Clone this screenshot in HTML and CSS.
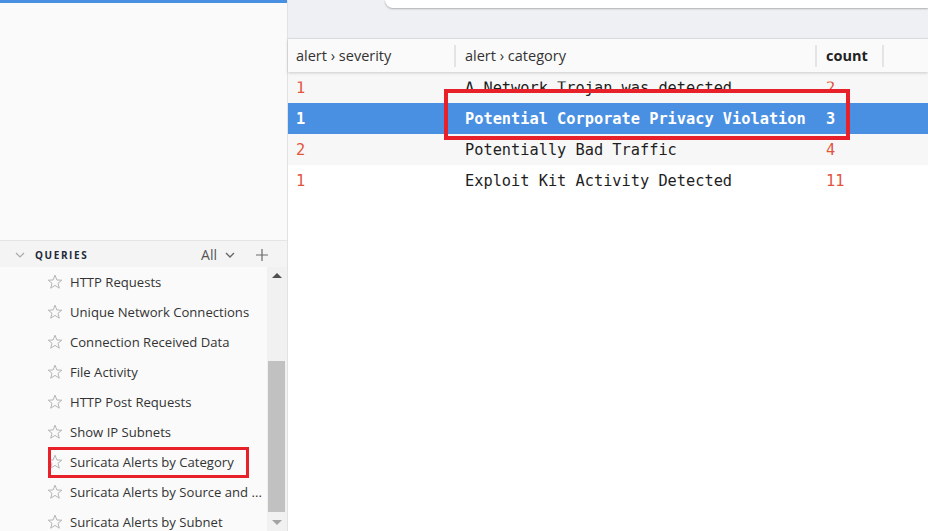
FILE: index.html
```html
<!DOCTYPE html>
<html>
<head>
<meta charset="utf-8">
<link rel="stylesheet" href="styles.css">
</head>
<body>
<aside class="sidebar">
  <div class="accent"></div>
  <div class="spacer"></div>
  <div class="q-header">
    <svg class="q-chev" width="10" height="6" viewBox="0 0 10 6"><path d="M1 1 L5 5 L9 1" fill="none" stroke="#aaa" stroke-width="1.2"/></svg>
    <span class="q-title">QUERIES</span>
    <span class="q-all">All</span>
    <svg class="q-down" width="10" height="6" viewBox="0 0 10 6"><path d="M1 1 L5 5 L9 1" fill="none" stroke="#666" stroke-width="1.4"/></svg>
    <svg class="q-plus" width="12" height="12" viewBox="0 0 12 12"><path d="M6 0 V12 M0 6 H12" stroke="#6a6a6a" stroke-width="1.2"/></svg>
  </div>
  <div class="q-body">
    <ul class="q-list">
      <li><svg class="star" viewBox="0 0 16 16"><path d="M8 1.2 L9.9 6 L14.8 6.2 L11 9.3 L12.3 14.2 L8 11.4 L3.7 14.2 L5 9.3 L1.2 6.2 L6.1 6 Z" fill="none" stroke="#b5b5b5" stroke-width="1"/></svg>HTTP Requests</li>
      <li><svg class="star" viewBox="0 0 16 16"><path d="M8 1.2 L9.9 6 L14.8 6.2 L11 9.3 L12.3 14.2 L8 11.4 L3.7 14.2 L5 9.3 L1.2 6.2 L6.1 6 Z" fill="none" stroke="#b5b5b5" stroke-width="1"/></svg>Unique Network Connections</li>
      <li><svg class="star" viewBox="0 0 16 16"><path d="M8 1.2 L9.9 6 L14.8 6.2 L11 9.3 L12.3 14.2 L8 11.4 L3.7 14.2 L5 9.3 L1.2 6.2 L6.1 6 Z" fill="none" stroke="#b5b5b5" stroke-width="1"/></svg>Connection Received Data</li>
      <li><svg class="star" viewBox="0 0 16 16"><path d="M8 1.2 L9.9 6 L14.8 6.2 L11 9.3 L12.3 14.2 L8 11.4 L3.7 14.2 L5 9.3 L1.2 6.2 L6.1 6 Z" fill="none" stroke="#b5b5b5" stroke-width="1"/></svg>File Activity</li>
      <li><svg class="star" viewBox="0 0 16 16"><path d="M8 1.2 L9.9 6 L14.8 6.2 L11 9.3 L12.3 14.2 L8 11.4 L3.7 14.2 L5 9.3 L1.2 6.2 L6.1 6 Z" fill="none" stroke="#b5b5b5" stroke-width="1"/></svg>HTTP Post Requests</li>
      <li><svg class="star" viewBox="0 0 16 16"><path d="M8 1.2 L9.9 6 L14.8 6.2 L11 9.3 L12.3 14.2 L8 11.4 L3.7 14.2 L5 9.3 L1.2 6.2 L6.1 6 Z" fill="none" stroke="#b5b5b5" stroke-width="1"/></svg>Show IP Subnets</li>
      <li><svg class="star" viewBox="0 0 16 16"><path d="M8 1.2 L9.9 6 L14.8 6.2 L11 9.3 L12.3 14.2 L8 11.4 L3.7 14.2 L5 9.3 L1.2 6.2 L6.1 6 Z" fill="none" stroke="#b5b5b5" stroke-width="1"/></svg>Suricata Alerts by Category</li>
      <li><svg class="star" viewBox="0 0 16 16"><path d="M8 1.2 L9.9 6 L14.8 6.2 L11 9.3 L12.3 14.2 L8 11.4 L3.7 14.2 L5 9.3 L1.2 6.2 L6.1 6 Z" fill="none" stroke="#b5b5b5" stroke-width="1"/></svg>Suricata Alerts by Source and ...</li>
      <li><svg class="star" viewBox="0 0 16 16"><path d="M8 1.2 L9.9 6 L14.8 6.2 L11 9.3 L12.3 14.2 L8 11.4 L3.7 14.2 L5 9.3 L1.2 6.2 L6.1 6 Z" fill="none" stroke="#b5b5b5" stroke-width="1"/></svg>Suricata Alerts by Subnet</li>
    </ul>
    <div class="scrollbar">
      <div class="arrow up"></div>
      <div class="track"><div class="thumb"></div></div>
      <div class="arrow down"></div>
    </div>
  </div>
  <div class="mark mark-query"></div>
</aside>
<main class="main">
  <div class="toolbar"><div class="search"></div></div>
  <div class="thead">
    <div class="th c-sev">alert › severity<span class="sep"></span></div>
    <div class="th c-cat">alert › category<span class="sep"></span></div>
    <div class="th c-cnt bold">count<span class="sep"></span></div>
  </div>
  <div class="tbody">
    <div class="row alt partial"><div class="td c-sev num">1</div><div class="td c-cat">A Network Trojan was detected</div><div class="td c-cnt num">2</div></div>
    <div class="row sel"><div class="td c-sev num">1</div><div class="td c-cat">Potential Corporate Privacy Violation</div><div class="td c-cnt num">3</div></div>
    <div class="row alt"><div class="td c-sev num">2</div><div class="td c-cat">Potentially Bad Traffic</div><div class="td c-cnt num">4</div></div>
    <div class="row"><div class="td c-sev num">1</div><div class="td c-cat">Exploit Kit Activity Detected</div><div class="td c-cnt num">11</div></div>
  </div>
  <div class="mark mark-row"></div>
</main>
</body>
</html>
```

FILE: styles.css
```css
* { box-sizing: border-box; }
html, body { margin: 0; padding: 0; }
body {
  width: 928px;
  height: 531px;
  overflow: hidden;
  display: flex;
  font-family: "Open Sans", "Noto Sans", sans-serif;
  color: #333;
  background: #fff;
  position: relative;
}
.sidebar {
  width: 288px;
  flex: none;
  display: flex;
  flex-direction: column;
  background: #fafafa;
  border-right: 1px solid #e2e2e2;
}
.accent { height: 3px; background: #4a90e2; flex: none; }
.spacer { height: 237px; flex: none; }
.q-header {
  height: 27px;
  flex: none;
  display: flex;
  align-items: center;
  background: #f4f4f4;
  border-top: 1px solid #e5e5e5;
  padding-left: 15px;
  padding-top: 1px;
}
.q-chev { margin-right: 10px; }
.q-title {
  font-size: 10px;
  font-weight: 700;
  letter-spacing: 1.6px;
  color: #1e2a3a;
}
.q-all { margin-left: auto; font-size: 14px; color: #555; margin-right: 8px; }
.q-down { margin-right: 21px; }
.q-plus { margin-right: 19px; }
.q-body { flex: 1; display: flex; min-height: 0; }
.q-list {
  list-style: none;
  margin: 0;
  padding: 0;
  flex: 1;
  min-width: 0;
  overflow: hidden;
}
.q-list li {
  height: 30px;
  display: flex;
  align-items: center;
  padding-left: 47px;
  font-size: 13.1px;
  color: #333;
  white-space: nowrap;
}
.star { width: 16px; height: 16px; margin-right: 7px; flex: none; }
.scrollbar {
  width: 20px;
  flex: none;
  background: #f1f1f1;
  display: flex;
  flex-direction: column;
}
.arrow { height: 17px; flex: none; display: flex; align-items: center; justify-content: center; }
.arrow::before {
  content: "";
  width: 0; height: 0;
  border-left: 5px solid transparent;
  border-right: 5px solid transparent;
}
.arrow.up::before { border-bottom: 5px solid #505050; }
.arrow.down::before { border-top: 5px solid #a3a3a3; }
.track { flex: 1; display: flex; flex-direction: column; padding-top: 77px; padding-bottom: 2px; }
.thumb { flex: 1; background: #c1c1c1; margin: 0 2px 0 1px; }

.main { flex: 1; display: flex; flex-direction: column; min-width: 0; background: #fff; }
.toolbar {
  height: 39px;
  flex: none;
  background: #eff0f3;
  border-bottom: 1px solid #e1e2e6;
  padding-left: 97px;
}
.search {
  height: 8px;
  background: #fff;
  border-radius: 0 0 0 14px;
  box-shadow: 0 1px 2px rgba(0,0,0,0.28);
}
.thead {
  height: 33px;
  flex: none;
  display: flex;
  align-items: center;
  background: #fafafa;
  box-shadow: 0 1px 3px rgba(0,0,0,0.18);
  position: relative;
  z-index: 1;
  font-size: 14.5px;
  color: #333;
}
.th { position: relative; height: 100%; display: flex; align-items: center; }
.th .sep {
  position: absolute;
  right: 0;
  top: 6px;
  width: 2px;
  height: 22px;
  background: #e4e4e4;
}
.bold { font-weight: 700; color: #222; }
.c-sev { width: 168px; padding-left: 8px; flex: none; }
.c-cat { width: 361px; padding-left: 9px; flex: none; }
.c-cnt { width: 67px; padding-left: 9px; flex: none; }
.tbody { font-family: "DejaVu Sans Mono", "Liberation Mono", monospace; font-size: 15.3px; color: #1e1e1e; }
.row { height: 31px; display: flex; align-items: center; background: #fff; }
.row.alt { background: #f7f7f7; }
.row.sel { background: #4a90e2; color: #fff; font-weight: 700; }
.row.sel .num { color: #fff; }
.td { white-space: nowrap; }
.tbody .c-cat { padding-left: 9px; }
.num { color: #e2543c; }
.row.partial .td { clip-path: inset(3px 0 0 0); }

.mark { position: absolute; border: 4px solid #e8202a; pointer-events: none; }
.mark-row { left: 444px; top: 89px; width: 406px; height: 51px; }
.mark-query { left: 48px; top: 447px; width: 201px; height: 31px; border-width: 3px; }
```
